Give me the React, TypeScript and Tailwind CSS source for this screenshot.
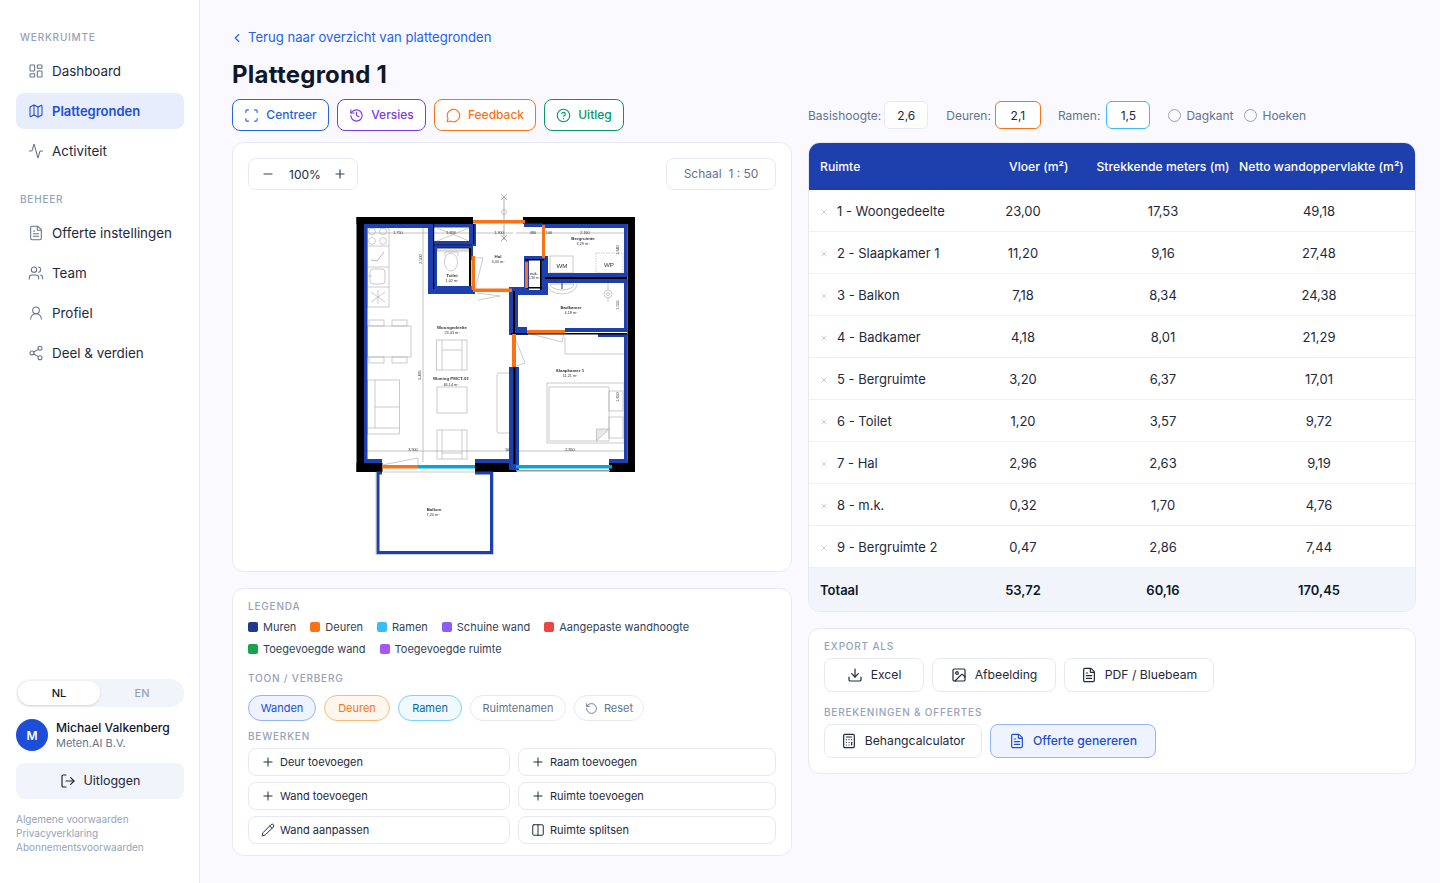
import {
  LayoutDashboard, Map, Activity, FileText, Users, UserRound, Share2, LogOut, ChevronLeft, Scan, History,
  MessageCircle, CircleHelp, Minus, Plus, RotateCcw, Pencil, Columns2, Download, Image as ImageIcon, Calculator, X,
} from "lucide-react";

const font = { fontFamily: "Inter, 'Noto Sans', sans-serif" };

function Label({ children, className = "" }: { children: React.ReactNode; className?: string }) {
  return <div className={`text-[10px] leading-[14px] font-medium tracking-[0.08em] uppercase text-[#94a3b8] ${className}`}>{children}</div>;
}

function NavItem({ icon: Icon, label, active = false }: { icon: any; label: string; active?: boolean }) {
  return (
    <div className={`flex h-9 items-center gap-2 rounded-lg pl-3 ${active ? "bg-[#e8edfd] text-[13px] font-semibold text-[#1d4ed8]" : "text-[13.4px] text-[#1e293b]"}`}>
      <Icon size={16} strokeWidth={1.6} className={active ? "text-[#1d4ed8]" : "text-[#64748b]"} />
      <span className={active ? "pt-[1px]" : ""}>{label}</span>
    </div>
  );
}

function Sidebar() {
  return (
    <aside className="flex h-full w-[200px] shrink-0 flex-col border-r border-[#e6e9f4] bg-white pt-[30px] pr-[15px] pb-[29px] pl-4">
      <Label className="px-1">Werkruimte</Label>
      <div className="mt-[9px] flex flex-col gap-1">
        <NavItem icon={LayoutDashboard} label="Dashboard" />
        <NavItem icon={Map} label="Plattegronden" active />
        <NavItem icon={Activity} label="Activiteit" />
      </div>
      <Label className="mt-[23px] px-1">Beheer</Label>
      <div className="mt-[9px] flex flex-col gap-1">
        <NavItem icon={FileText} label="Offerte instellingen" />
        <NavItem icon={Users} label="Team" />
        <NavItem icon={UserRound} label="Profiel" />
        <NavItem icon={Share2} label="Deel & verdien" />
      </div>
      <div className="mt-auto flex h-7 items-center rounded-full bg-[#f1f4fb] p-[2px] text-[11px] font-medium">
        <div className="flex h-6 w-[82px] items-center justify-center rounded-full bg-white text-[#0f172a] shadow-sm">NL</div>
        <div className="flex-1 pl-[2px] text-center text-[#94a3b8]">EN</div>
      </div>
      <div className="mt-3 flex items-center gap-2">
        <div className="flex h-8 w-8 items-center justify-center rounded-full bg-[#1d4ed8] pt-[1px] text-xs font-semibold text-white">M</div>
        <div>
          <div className="text-[12.1px] leading-4 font-medium text-[#0f172a]">Michael Valkenberg</div>
          <div className="text-[11px] leading-[14px] text-[#64748b]">Meten.AI B.V.</div>
        </div>
      </div>
      <div className="mt-3 flex h-9 items-center justify-center gap-2 rounded-lg bg-[#f1f4fb] text-[12.5px] text-[#1e293b]">
        <LogOut size={16} strokeWidth={1.8} />
        <span className="pt-[1px]">Uitloggen</span>
      </div>
      <div className="mt-[13px] text-[10px] leading-[14px] text-[#94a3b8]">
        <div>Algemene voorwaarden</div>
        <div>Privacyverklaring</div>
        <div>Abonnementsvoorwaarden</div>
      </div>
    </aside>
  );
}

function ToolButton({ icon: Icon, label, cls }: { icon: any; label: string; cls: string }) {
  return (
    <div className={`flex h-8 items-center justify-center gap-[7px] rounded-lg border bg-white text-[12px] font-medium ${cls}`}>
      <Icon size={15} strokeWidth={1.8} />
      {label}
    </div>
  );
}

const g = "#a8a8a8";

function FloorPlan() {
  const blue = "#1e40af";
  const orange = "#f97316";
  const cyan = "#06a6d4";
  const T = ({ x, y, s, b = false, r, children }: { x: number; y: number; s?: number; b?: boolean; r?: boolean; children: React.ReactNode }) => (
    <text x={x} y={y} fontSize={s ?? (b ? 4.4 : 3.8)} fontWeight={b ? 700 : 400} textAnchor="middle" fill="#333" transform={r ? `rotate(-90 ${x} ${y})` : undefined} fontFamily="Liberation Sans, sans-serif">{children}</text>
  );
  const B = ({ d, c = blue }: { d: [number, number, number, number]; c?: string }) => <rect x={d[0]} y={d[1]} width={d[2] - d[0]} height={d[3] - d[1]} fill={c} />;
  const blues: [number, number, number, number][] = [
    [364, 224, 433, 228], [364, 224, 367.5, 463], [364, 459, 382, 463], [428, 224, 433, 294], [428, 289, 475, 294],
    [433, 224, 476, 227.5], [433, 241, 473, 248], [433, 244, 437, 289], [469, 224, 476, 246], [469, 244, 473, 260], [433, 286, 472, 290],
    [524, 223.5, 543, 227], [543, 224, 627.5, 228], [624, 224, 627.5, 277], [545, 258, 548, 277], [545, 273, 627.5, 277],
    [547, 279, 627.5, 283], [624, 279, 627.5, 331], [565, 328, 627.5, 332], [524, 256, 548, 259], [524, 256, 529, 290], [540, 258, 548, 295],
    [509, 287, 527, 291], [509, 290, 518, 335], [515, 290, 547, 295], [515, 327, 527, 332], [509, 331, 528, 335],
    [509, 367, 519, 470], [475, 459, 513, 463], [609, 459, 627.5, 463], [624, 334, 627.5, 463], [598, 334, 627.5, 337],
  ];
  return (
    <svg viewBox="350 190 290 370" width={290} height={370} className="blur-[0.4px]">
      {/* outer walls */}
      <rect x={356.5} y={217} width={116.5} height={7} fill="#000" />
      <rect x={523} y={217} width={112} height={7} fill="#000" />
      <rect x={356.5} y={217} width={8} height={255} fill="#000" />
      <rect x={627.5} y={217} width={7.5} height={255} fill="#000" />
      <rect x={356.5} y={463} width={26} height={9} fill="#000" />
      <rect x={475} y={463} width={42} height={9} fill="#000" />
      <rect x={609} y={463} width={26} height={9} fill="#000" />
      {/* furniture and dimensions */}
      <g fill="none" stroke={g} strokeWidth={0.6}>
        <path d="M367 233H513M516 233H624M367 451H509M519 451H624M423 228V462M473 227V224" strokeWidth={0.7} />
        <rect x={367.5} y={228} width={21.5} height={79} />
        <path d="M367.5 246H389M367.5 267H389M367.5 287H389" />
        <circle cx={372} cy={231.5} r={3.4} /><circle cx={383} cy={231.5} r={3.4} /><circle cx={372} cy={241} r={3.4} /><circle cx={383} cy={241} r={3.4} />
        <path d="M371 260L377 261L384 252" stroke="#888" />
        <rect x={370} y={269} width={15} height={15} rx={3} />
        <path d="M368 276H372M378 290V304M371 292L385 302M385 292L371 302" />
        <rect x={367.5} y={326} width={43.5} height={31} />
        <rect x={369} y={320} width={15} height={6} /><rect x={392} y={320} width={15} height={6} />
        <rect x={369} y={357} width={15} height={6} /><rect x={392} y={357} width={15} height={6} />
        <rect x={436.5} y={340} width={30.5} height={30} /><path d="M442 340V370M462 340V370M442 350H462" />
        <rect x={437} y={387} width={30} height={26} />
        <rect x={437} y={430} width={30} height={29} /><path d="M442 430V459M462 430V459M442 453H462" />
        <rect x={367.5} y={380} width={32} height={54} /><path d="M375 380V428M375 407H399.5M367.5 428H399.5" />
        <path d="M509 373H499Q497 373 497 375V431Q497 433 499 433H509" />
        <rect x={547} y={383} width={77} height={60} />
        <rect x={549} y={387} width={60} height={54} />
        <path d="M596.5 441V429H609L596.5 441Z" fill="#e8e8e8" />
        <rect x={609} y={391} width={14} height={20} /><rect x={609} y={417} width={14} height={21} />
        <path d="M565 337V354H624" />
        <rect x={550} y={256} width={23} height={17} />
        <rect x={596} y={253} width={27} height={20} strokeDasharray="1.5 1" />
        <path d="M550 284A12 6 0 0 0 574 284Z" />
        <path d="M547 284A15 10 0 0 0 577 284" />
        <path d="M562 283V289" strokeWidth={1.2} stroke="#555" />
        <circle cx={608} cy={294} r={4} /><circle cx={608} cy={294} r={1.5} />
        <path d="M608 281V290M608 298V302" />
        <ellipse cx={451} cy={262} rx={6.5} ry={9} />
        <path d="M445 256V252H458V256" />
        <rect x={437} y={248} width={32} height={3} fill="#e5e7eb" />
        <path d="M437 228L469 241M469 228L437 241" />
        <path d="M471 257.6L483 258L475 290M477 293L500 296L478 300M527 333L562 342L564 333M514 335L525 363L514 367M382 465L418 458V465" />
        <path d="M504 197V240M501 194L507 200M507 194L501 200M501 235L507 241M507 235L501 241" stroke="#777" />
        <circle cx={504} cy={212} r={2.5} />
      </g>
      {blues.map((d, i) => <B key={i} d={d} />)}
      <path d="M433 245H472M437 248H469" stroke="#000" strokeWidth={0.6} />
      <rect x={469} y={248} width={2} height={38} fill="#000" />
      <rect x={433} y={224} width={1.2} height={65} fill="#000" />
      <rect x={473} y={224} width={1.2} height={20} fill="#000" />
      <rect x={545} y={277} width={82} height={2} fill="#000" />
      <rect x={511} y={333} width={116} height={1.5} fill="#000" />
      <rect x={513} y={291} width={2} height={42} fill="#000" />
      <rect x={513.5} y={367} width={2} height={97} fill="#000" />
      <rect x={525} y={259} width={19} height={1.5} fill="#000" />
      <rect x={540} y={259} width={1.5} height={31} fill="#000" />
      <rect x={526} y={287} width={16} height={1.5} fill="#000" />
      {/* doors */}
      <B d={[473, 220, 525, 223.5]} c={orange} />
      <B d={[471.5, 256, 475, 290]} c={orange} />
      <B d={[473, 288.5, 512, 292]} c={orange} />
      <B d={[542, 225, 545, 258]} c={orange} />
      <B d={[525, 262, 528, 288]} c={orange} />
      <B d={[527, 330, 565, 333.5]} c={orange} />
      <B d={[512, 334, 516, 367]} c={orange} />
      <B d={[382, 465, 418, 468.5]} c={orange} />
      {/* windows */}
      <B d={[418, 465, 475, 468.5]} c={cyan} />
      <rect x={516} y={470} width={94} height={1.5} fill="#999" />
      <B d={[516, 465, 612, 468.5]} c={cyan} />
      {/* balcony */}
      <path d="M382 473H378V552.5H491.5V473H475" fill="none" stroke={blue} strokeWidth={3} />
      <path d="M376 472V554.5H493.5V472" fill="none" stroke="#aaa" strokeWidth={0.6} />
      <path d="M382 472H475" stroke="#bbb" strokeWidth={0.8} />
      {/* labels */}
      <T x={398} y={233.5}>1.750</T><T x={451} y={233.5}>1.858</T><T x={499} y={233.5}>1.300</T><T x={533} y={233.5}>480</T><T x={549} y={233.5}>100</T><T x={585} y={233.5}>2.160</T>
      <T x={422} y={259} r>2.500</T><T x={421} y={375} r>5.435</T><T x={619} y={250} r>1.640</T><T x={619} y={305} r>1.555</T><T x={619} y={397} r>1.650</T>
      <T x={413} y={450.5}>3.900</T><T x={507} y={450.5}>10</T><T x={570} y={450.5}>2.850</T>
      <T x={452} y={328.5} b>Woongedeelte</T><T x={452} y={334}>23,43 m²</T>
      <T x={451} y={380} b>Woning PMCT-01</T><T x={451} y={385.5}>46,14 m²</T>
      <T x={452} y={276.5} b>Toilet</T><T x={452} y={282}>1,02 m²</T>
      <T x={498} y={258} b>Hal</T><T x={498} y={263}>3,03 m²</T>
      <T x={583} y={239.5} b>Bergruimte</T><T x={583} y={244.5}>3,29 m²</T>
      <T x={571} y={308.5} b>Badkamer</T><T x={571} y={313.5}>4,18 m²</T>
      <T x={570} y={371.5} b>Slaapkamer 1</T><T x={570} y={376.5}>11,21 m²</T>
      <T x={534} y={274.5} s={3.8} b>m.k.</T><T x={534} y={279} s={3.2}>0,38 m²</T>
      <T x={434} y={510.5} b>Balkon</T><T x={433} y={516}>7,20 m²</T>
      <T x={562} y={267.5} s={6.2}>WM</T><T x={609} y={266.5} s={6.2}>WP</T>
    </svg>
  );
}

function Swatch({ color, label }: { color: string; label: string }) {
  return (
    <div className="flex items-center gap-[5px]">
      <span className={`h-[10px] w-[10px] rounded-[2px] ${color}`} />
      <span>{label}</span>
    </div>
  );
}

function EditButton({ icon: Icon, label }: { icon: any; label: string }) {
  return (
    <div className="flex h-7 items-center gap-[5px] rounded-lg border border-[#e6e9f4] bg-white pl-3 text-[11px] text-[#1e293b]">
      <Icon size={14} strokeWidth={1.7} />
      {label}
    </div>
  );
}

function LeftColumn() {
  return (
    <div className="flex w-[560px] flex-col">
      <div className="flex gap-2">
        <ToolButton icon={Scan} label="Centreer" cls="w-[97px] border-[#2563eb] text-[#2563eb]" />
        <ToolButton icon={History} label="Versies" cls="w-[89px] border-[#7c3aed] text-[#7c3aed]" />
        <ToolButton icon={MessageCircle} label="Feedback" cls="w-[102px] border-[#f97316] text-[#f97316]" />
        <ToolButton icon={CircleHelp} label="Uitleg" cls="w-[80px] border-[#059669] text-[#059669]" />
      </div>
      <div className="relative mt-[11px] h-[430px] rounded-xl border border-[#e6e9f4] bg-white">
        <div className="absolute top-[15px] left-[15px] flex h-8 w-[110px] items-center justify-between rounded-lg border border-[#e6e9f4] bg-white pr-[10px] pl-3 text-[12px] text-[#1e293b]">
          <Minus size={14} strokeWidth={2} className="text-[#334155]" />
          <span className="pt-[2px] pl-[2px]">100%</span>
          <Plus size={14} strokeWidth={2} className="text-[#334155]" />
        </div>
        <div className="absolute top-[15px] right-[15px] flex h-8 w-[110px] items-center justify-center rounded-lg border border-[#e6e9f4] bg-white text-[12px] text-[#64748b]">Schaal&nbsp; 1 : 50</div>
        <div className="ml-[117px] pt-[47px]"><FloorPlan /></div>
      </div>
      <div className="mt-4 h-[268px] rounded-xl border border-[#e6e9f4] bg-white px-[15px] pt-[10px]">
        <Label>Legenda</Label>
        <div className="mt-[3px] flex h-[22px] items-center gap-[14px] text-[11px] text-[#334155]">
          <Swatch color="bg-[#1e3a8a]" label="Muren" />
          <Swatch color="bg-[#f97316]" label="Deuren" />
          <Swatch color="bg-[#38bdf8]" label="Ramen" />
          <Swatch color="bg-[#8b5cf6]" label="Schuine wand" />
          <Swatch color="bg-[#ef4444]" label="Aangepaste wandhoogte" />
        </div>
        <div className="flex h-[22px] items-center gap-[14px] text-[11px] text-[#334155]">
          <Swatch color="bg-[#16a34a]" label="Toegevoegde wand" />
          <Swatch color="bg-[#a855f7]" label="Toegevoegde ruimte" />
        </div>
        <Label className="mt-[11px]">Toon / Verberg</Label>
        <div className="mt-[10px] flex gap-2 text-[11px]">
          <div className="flex h-[26px] w-[68px] items-center justify-center rounded-full border border-[#93b4f5] bg-[#eef3ff] text-[#1d4ed8]">Wanden</div>
          <div className="flex h-[26px] w-[66px] items-center justify-center rounded-full border border-[#fdba74] bg-[#fff7ed] text-[#f97316]">Deuren</div>
          <div className="flex h-[26px] w-[64px] items-center justify-center rounded-full border border-[#7dd3fc] bg-[#f0f9ff] text-[#0369a1]">Ramen</div>
          <div className="flex h-[26px] w-[96px] items-center justify-center rounded-full border border-[#e6e9f4] text-[#64748b]">Ruimtenamen</div>
          <div className="flex h-[26px] w-[70px] items-center justify-center gap-[6px] rounded-full border border-[#e6e9f4] text-[#64748b]"><RotateCcw size={13} strokeWidth={1.7} />Reset</div>
        </div>
        <Label className="mt-2">Bewerken</Label>
        <div className="mt-[5px] grid grid-cols-[262px_258px] gap-x-2 gap-y-[6px]">
          <EditButton icon={Plus} label="Deur toevoegen" />
          <EditButton icon={Plus} label="Raam toevoegen" />
          <EditButton icon={Plus} label="Wand toevoegen" />
          <EditButton icon={Plus} label="Ruimte toevoegen" />
          <EditButton icon={Pencil} label="Wand aanpassen" />
          <EditButton icon={Columns2} label="Ruimte splitsen" />
        </div>
      </div>
    </div>
  );
}

const rows = [
  ["1 - Woongedeelte", "23,00", "17,53", "49,18"],
  ["2 - Slaapkamer 1", "11,20", "9,16", "27,48"],
  ["3 - Balkon", "7,18", "8,34", "24,38"],
  ["4 - Badkamer", "4,18", "8,01", "21,29"],
  ["5 - Bergruimte", "3,20", "6,37", "17,01"],
  ["6 - Toilet", "1,20", "3,57", "9,72"],
  ["7 - Hal", "2,96", "2,63", "9,19"],
  ["8 - m.k.", "0,32", "1,70", "4,76"],
  ["9 - Bergruimte 2", "0,47", "2,86", "7,44"],
];

function ValueBox({ value, cls }: { value: string; cls: string }) {
  return <div className={`flex h-7 items-center justify-center rounded-md border bg-white pt-[2px] text-[12px] text-[#1e293b] ${cls}`}>{value}</div>;
}

function Radio({ label, cls }: { label: string; cls: string }) {
  return (
    <div className={`mt-[1px] flex items-center gap-[5px] ${cls}`}>
      <span className="h-[13px] w-[13px] rounded-full border border-[#94a3b8]" />
      <span className="pt-[1px]">{label}</span>
    </div>
  );
}

function ExportButton({ icon: Icon, label, w }: { icon: any; label: string; w: string }) {
  return (
    <div className={`flex h-[34px] items-center justify-center gap-2 rounded-lg border border-[#e6e9f4] bg-white text-[12.2px] text-[#1e293b] ${w}`}>
      <Icon size={16} strokeWidth={1.8} />
      <span className="pt-[1px]">{label}</span>
    </div>
  );
}

function RightColumn() {
  return (
    <div className="flex w-[608px] flex-col">
      <div className="flex h-8 items-center text-[12px] text-[#64748b]">
        <span className="pt-[2px]">Basishoogte:</span>
        <ValueBox value="2,6" cls="ml-[3px] w-11 border-[#e6e9f4]" />
        <span className="ml-[18px] pt-[2px]">Deuren:</span>
        <ValueBox value="2,1" cls="ml-1 w-[46px] border-[#f97316]" />
        <span className="ml-[17px] pt-[2px]">Ramen:</span>
        <ValueBox value="1,5" cls="ml-[6px] w-11 border-[#38bdf8]" />
        <Radio label="Dagkant" cls="ml-[18px]" />
        <Radio label="Hoeken" cls="ml-[11px]" />
      </div>
      <div className="mt-[11px] h-[470px] overflow-hidden rounded-xl border border-[#e6e9f4] bg-white">
        <div className="grid h-[47px] grid-cols-[144px_140px_140px_172px] items-center whitespace-nowrap bg-[#1e40af] pt-[2px] text-[12.2px] font-medium text-white">
          <div className="pl-[11px]">Ruimte</div>
          <div className="pl-[56px]">Vloer (m²)</div>
          <div className="text-center">Strekkende meters (m)</div>
          <div className="pl-[6px]">Netto wandoppervlakte (m²)</div>
        </div>
        {rows.map((r) => (
          <div key={r[0]} className="grid h-[42px] grid-cols-[144px_140px_140px_172px] items-center border-b border-[#eef0f7] pt-[3px] text-[13px] text-[#1e293b]">
            <div className="flex items-center whitespace-nowrap pl-[11px]"><X size={8} strokeWidth={1.5} className="mr-[9px] text-[#94a3b8]" />{r[0]}</div>
            <div className="text-center">{r[1]}</div>
            <div className="text-center">{r[2]}</div>
            <div className="text-center">{r[3]}</div>
          </div>
        ))}
        <div className="grid h-[43px] grid-cols-[144px_140px_140px_172px] items-center bg-[#f1f5fb] pt-[2px] text-[13px] font-semibold text-[#0f172a]">
          <div className="pl-[11px]">Totaal</div>
          <div className="text-center">53,72</div>
          <div className="text-center">60,16</div>
          <div className="text-center">170,45</div>
        </div>
      </div>
      <div className="mt-4 h-[146px] rounded-xl border border-[#e6e9f4] bg-white px-[15px] pt-[10px]">
        <Label>Export als</Label>
        <div className="mt-[5px] flex gap-2">
          <ExportButton icon={Download} label="Excel" w="w-[100px]" />
          <ExportButton icon={ImageIcon} label="Afbeelding" w="w-[124px]" />
          <ExportButton icon={FileText} label="PDF / Bluebeam" w="w-[150px]" />
        </div>
        <Label className="mt-[13px]">Berekeningen & offertes</Label>
        <div className="mt-[5px] flex gap-2">
          <ExportButton icon={Calculator} label="Behangcalculator" w="w-[158px]" />
          <div className="flex h-[34px] w-[166px] items-center justify-center gap-2 rounded-lg border border-[#93b4f5] bg-[#eef3ff] text-[12.2px] font-medium text-[#1d4ed8]">
            <FileText size={16} strokeWidth={1.8} />
            <span className="pt-[1px]">Offerte genereren</span>
          </div>
        </div>
      </div>
    </div>
  );
}

export default function App() {
  return (
    <div className="flex h-[883px] w-[1440px] overflow-hidden bg-[#f9f9ff]" style={font}>
      <Sidebar />
      <main className="flex flex-1 flex-col pl-8 pt-[29px]">
        <div className="flex h-[18px] items-center gap-1 text-[13.1px] text-[#2563eb]">
          <ChevronLeft size={14} strokeWidth={2} className="-ml-[2px]" />
          Terug naar overzicht van plattegronden
        </div>
        <h1 className="mt-[12px] text-2xl leading-8 font-bold tracking-[0.01em] text-[#0f172a]">Plattegrond 1</h1>
        <div className="mt-[8px] flex gap-4">
          <LeftColumn />
          <RightColumn />
        </div>
      </main>
    </div>
  );
}
